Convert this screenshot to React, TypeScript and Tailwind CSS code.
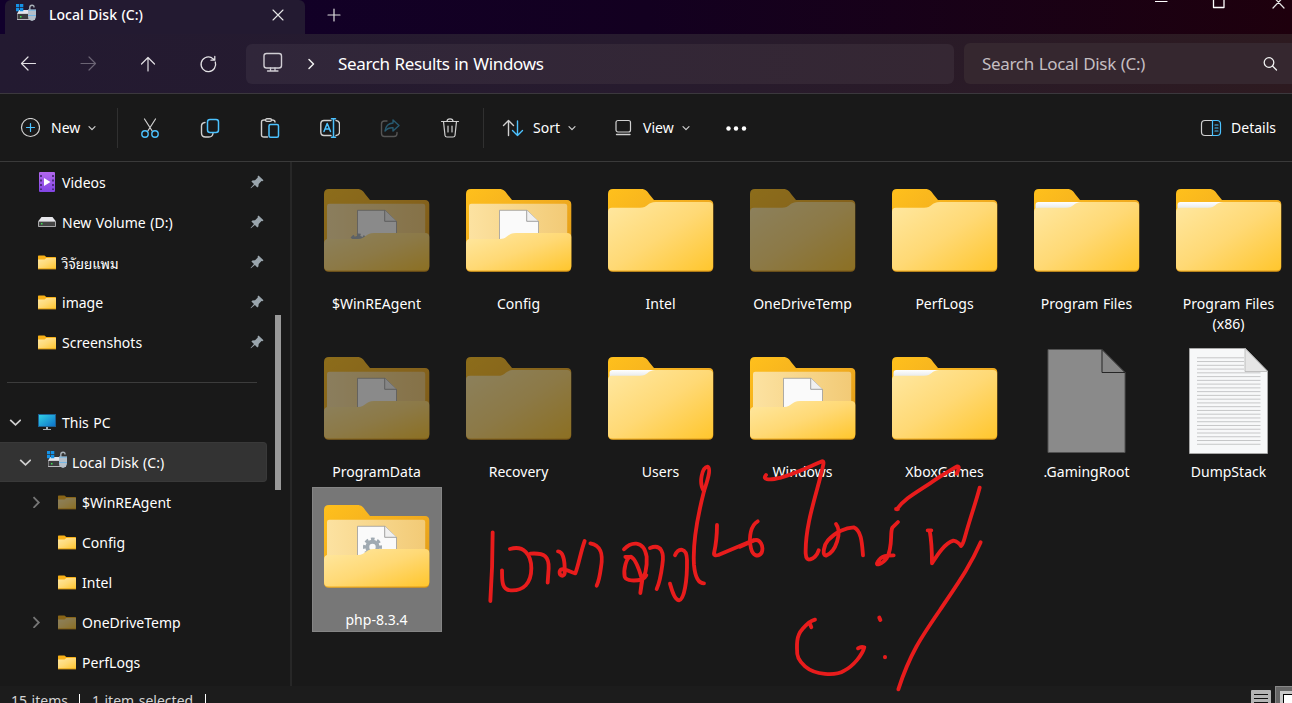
import type { ReactNode } from "react";

const BLUE = "#4cc2ff";
const GREY = "#d0d0d0";

function Icon({ children, w = 20, h = 20, className = "" }: { children: ReactNode; w?: number; h?: number; className?: string }) {
  return (
    <svg width={w} height={h} viewBox={`0 0 ${w} ${h}`} fill="none" stroke={GREY} strokeWidth="1.2" strokeLinecap="round" strokeLinejoin="round" className={`shrink-0 ${className}`}>
      {children}
    </svg>
  );
}

function DriveIcon() {
  return (
    <svg width="20" height="18" viewBox="0 0 20 18" className="shrink-0">
      <path d="M3 6h14l2 4H1z" fill="#e4e4ea" />
      <rect x="1" y="9.500" width="18" height="6.500" rx=".6" fill="#b8b8bc" />
      <rect x="1.500" y="10" width="11" height="5" fill="#3c3c3e" />
      <rect x="4" y="12" width="1.500" height="1.500" fill="#35e04b" />
      <path d="M0 0h3.300v3.300H0zM4 0h3.300v3.300H4zM0 4h3.300v3.300H0zM4 4h3.300v3.300H4z" fill="#1592e6" />
      <path d="M13.800 6V3.500q0-2.300 2.200-2.300T18 3.500" fill="none" stroke="#a9b1b8" strokeWidth="1.400" />
      <path d="M12 5.500h8v6.500q0 4-4 5-4-1-4-5z" fill="#b4bfc9" />
      <path d="M12 6.200h8M12 11.500h8" stroke="#6db4e6" strokeWidth=".9" />
    </svg>
  );
}

function SmallFolder({ dim = false }: { dim?: boolean }) {
  return (
    <svg width="18" height="15" viewBox="0 0 18 15" className={dim ? "shrink-0 opacity-50" : "shrink-0"}>
      <path d="M0 1.200Q0 .5.700.5H6.500L8.300 2H17.400Q18 2 18 2.600V14H0z" fill="#f8b117" />
      <path d="M0 4.500H6.500L8.300 3H18V13.500H0z" fill="url(#front)" />
      <path d="M0 14h18" stroke="#d99a1c" strokeWidth=".8" />
    </svg>
  );
}

function Pin() {
  return (
    <svg width="14" height="14" viewBox="0 0 14 14" className="shrink-0" fill="#9aa5ad">
      <path d="M8.500.500 13.500 5.200 12.400 6.300 11.500 6.100 8.700 9 8.400 11.500 7.300 12.500 4.900 9.900 1 13.300.5 12.900 4 9 1.400 6.500 2.400 5.400 5 5.200 7.800 2.400 7.600 1.500z" />
    </svg>
  );
}

function Chevron({ open }: { open?: boolean }) {
  return open ? (
    <svg width="12" height="12" viewBox="0 0 12 12" fill="none" stroke="#cfcfcf" strokeWidth="1.800" className="shrink-0">
      <path d="M1.200 3.800 6.500 8.800 11.800 3.800" />
    </svg>
  ) : (
    <svg width="12" height="12" viewBox="0 0 12 12" fill="none" stroke="#767676" strokeWidth="1.800" className="shrink-0">
      <path d="M3.500 1.200 8.800 6.500 3.500 11.800" />
    </svg>
  );
}

function MenuChevron() {
  return (
    <Icon w={10} h={8}>
      <path d="M2 2.700 5 5.700 8 2.700" strokeWidth="1.200" />
    </Icon>
  );
}

function MenuLabel({ children, className }: { children: ReactNode; className: string }) {
  return <span className={`pt-px ${className}`}>{children}</span>;
}

type Kind = "closed" | "full" | "open" | "gear" | "gearLow" | "blank" | "text";

function Gear({ x, y }: { x: number; y: number }) {
  return (
    <g transform={`translate(${x} ${y})`} fill="none" stroke="#a0aab2">
      <circle r="5.200" strokeWidth="4" />
      <circle r="8" strokeWidth="3" strokeDasharray="3.600 2.683" strokeDashoffset="1.800" />
    </g>
  );
}

function BigIcon({ kind, dim }: { kind: Kind; dim?: boolean }) {
  const opened = kind === "open" || kind === "gear" || kind === "gearLow";
  const folder = opened || kind === "closed" || kind === "full";
  return (
    <svg width="130" height="122" viewBox="0 0 130 122" className={dim ? "shrink-0 opacity-50" : "shrink-0"}>
      {folder && (
        <path d="M12 23Q12 18 17 18H45C50 18 51.500 20.500 53.500 23.500L58 29H113Q117.300 29 117.300 33.500V96Q117.300 100.800 112.500 100.800H17Q12 100.800 12 96z" fill="url(#back)" />
      )}
      {kind === "full" && <path d="M13.500 41V34Q13.500 31 16.500 31H60L50 38H13.500z" fill="url(#sheet)" />}
      {folder && !opened && (
        <path d="M12 41Q12 36.800 16 36.800H44C52 36.800 51 31 60 31H113Q117 31 117 35V95Q117 99.500 112.500 99.500H16.500Q12 99.500 12 95z" fill="url(#front)" />
      )}
      {opened && (
        <>
          <path d="M15 35Q15 32.700 17.300 32.700H111Q113.200 32.700 113.200 35V72H15z" fill="url(#inner)" />
          <path d="M45.500 75V39.300H73L84.500 50.500V75z" fill="#fafafa" stroke="#9a9a9a" strokeWidth=".8" />
          <path d="M72.700 39.300V50.300H84.500" fill="#f0f0f0" stroke="#8a8a8a" strokeWidth=".8" />
          {kind === "gear" && <Gear x={60.500} y={60} />}
          {kind === "gearLow" && <Gear x={46.500} y={72} />}
          <path d="M12 72.500Q12 68 16 68H46C54 68 53 62 62 62H113Q117.300 62 117.300 66V95Q117.300 99.500 112.500 99.500H16.500Q12 99.500 12 95z" fill="url(#front)" />
        </>
      )}
      {kind === "blank" && (
        <>
          <path d="M26 10.500H80L103 33.500V113.500H26z" fill="#fafafa" stroke="#8a8a8a" />
          <path d="M80 10.500V33.500H103z" fill="#f4f4f4" stroke="#333" />
        </>
      )}
      {kind === "text" && (
        <>
          <path d="M25.500 9.500H81.500L103.500 32V114.500H25.500z" fill="#f7f8f9" stroke="#b4b4b4" strokeWidth=".7" />
          <g stroke="#c6c7c8">
            {Array.from({ length: 24 }, (_, i) => (
              <path key={i} d={`M33 ${18.800 + i * 3.760}H${i < 4 ? 80 : 96.500}`} />
            ))}
          </g>
          <path d="M81 9.500V32.500H103.500z" fill="#e6e6e6" stroke="#b4b4b4" strokeWidth=".8" />
        </>
      )}
    </svg>
  );
}

const files: { name: string; kind: Kind; dim?: boolean; selected?: boolean }[] = [
  { name: "$WinREAgent", kind: "gearLow", dim: true },
  { name: "Config", kind: "open" },
  { name: "Intel", kind: "closed" },
  { name: "OneDriveTemp", kind: "closed", dim: true },
  { name: "PerfLogs", kind: "closed" },
  { name: "Program Files", kind: "full" },
  { name: "Program Files (x86)", kind: "full" },
  { name: "ProgramData", kind: "open", dim: true },
  { name: "Recovery", kind: "closed", dim: true },
  { name: "Users", kind: "full" },
  { name: "Windows", kind: "open" },
  { name: "XboxGames", kind: "full" },
  { name: ".GamingRoot", kind: "blank", dim: true },
  { name: "DumpStack", kind: "text" },
  { name: "php-8.3.4", kind: "gear", selected: true },
];

function QuickRow({ icon, label, thai }: { icon: ReactNode; label: string; thai?: boolean }) {
  return (
    <div className="flex h-10 w-[267px] items-center pl-[38px] pr-[3px]">
      <span className="flex w-6 items-center">{icon}</span>
      <span className={thai ? "flex-1 pt-0.5 font-['Noto_Sans_Thai_Looped','Noto_Looped_Thai','Loma','Waree','Garuda','Noto_Sans_Thai',sans-serif] text-[13.5px] tracking-normal" : "flex-1 pt-0.5"}>{label}</span>
      <Pin />
    </div>
  );
}

function TreeRow({ label, chevron, dim }: { label: string; chevron?: boolean; dim?: boolean }) {
  return (
    <div className="flex h-10 items-center pl-[30px]">
      <span className="flex w-7 items-center">{chevron && <Chevron />}</span>
      <span className="flex w-6 items-center"><SmallFolder dim={dim} /></span>
      <span className="pt-0.5">{label}</span>
    </div>
  );
}

function Handwriting() {
  return (
    <svg width="1292" height="703" viewBox="0 0 1292 703" className="pointer-events-none absolute left-0 top-0" fill="none" stroke="#e81c1c" strokeLinecap="round" strokeLinejoin="round">
      <g transform="translate(470 440) scale(.33333)" strokeWidth="11.500">
        <path d="M68 277 Q68 380 61 483" />
        <path d="M120 327C160 315 184 342 184 385C184 430 160 453 122 451C92 449 97 415 96 391" />
        <path d="M181 341C225 338 237 350 236 385L233 428" />
        <path d="M264 334C282 335 285 372 284 400C280 413 267 407 269 394C275 378 295 395 316 400C326 375 332 335 344 303" />
        <path d="M361 310C397 317 399 348 393 382C389 412 386 425 380 437" />
        <path d="M462 328C480 308 520 295 530 350C532 385 524 410 516 418C497 423 470 424 464 410C460 390 468 352 483 350C500 360 511 400 516 418Q525 415 529 406M466 351L483 350M516 418L511 459L517 420" />
        <path d="M540 324C575 310 583 340 577 375C573 405 568 430 560 447" />
        <path d="M615 346C625 323 650 320 651 360C652 420 643 479 627 481C614 480 606 452 600 431" />
        <path d="M702 154C685 130 696 82 713 80C725 86 710 128 702 154C685 220 667 300 672 375C675 408 682 430 702 430" />
        <path d="M741 255Q741 300 732 340Q731 349 745 345L850 301" />
      </g>
      <g transform="translate(740 440) scale(.33333)" strokeWidth="11.500">
        <path d="M0 320L38 303C60 292 72 318 65 338C54 354 38 346 33 325C25 290 33 255 53 244" />
        <path d="M78 105C65 120 90 119 103 117C145 110 185 90 246 64Q253 62 249 78C234 150 195 250 197 340C198 357 204 361 211 358Q229 352 236 331" />
        <path d="M288 252C307 275 288 336 258 347C246 345 251 316 264 301C286 275 319 263 341 262C365 272 366 310 369 346" />
        <path d="M470 208C495 175 525 160 570 130C600 110 630 90 653 79Q661 80 650 101M468 207H474" />
        <path d="M474 246L457 263C449 280 460 320 440 355C425 374 404 379 413 366C424 346 443 346 461 346" />
        <path d="M563 271H574M569 271C574 300 576 340 576 370C595 340 615 310 640 302Q655 305 663 318Q669 313 675 290C695 220 705 195 719 143" />
        <path d="M722 307C690 380 650 435 600 510C545 590 510 640 475 748" />
        <path d="M225 539Q216 542 208 547L214 562M208 547C175 575 170 590 171 625C170 650 176 662 195 679C225 705 285 709 313 692C340 678 367 645 373 622Q363 619 354 625" />
        <path d="M418 533L421 540M435 651V652" strokeWidth="12" />
      </g>
    </svg>
  );
}

export default function App() {
  return (
    <div className="relative flex h-[703px] w-[1292px] flex-col overflow-hidden bg-[#191919] font-['Noto_Sans','Noto_Sans_Thai','Liberation_Sans',sans-serif] text-[14px] leading-5 tracking-[0.02px] text-white [word-spacing:0.8px]">
      <svg width="0" height="0" className="absolute">
        <defs>
          <linearGradient id="back" x1="0" y1="0" x2="1" y2="1"><stop stopColor="#ffc01c" /><stop offset=".5" stopColor="#f1ac20" /><stop offset="1" stopColor="#dc9713" /></linearGradient>
          <linearGradient id="front" x1="0" y1="0" x2="1" y2="1"><stop stopColor="#ffe8a2" /><stop offset=".5" stopColor="#ffd975" /><stop offset="1" stopColor="#ffc62d" /></linearGradient>
          <linearGradient id="inner" x1="0" y1="0" x2="1" y2="0"><stop stopColor="#fce2a1" /><stop offset="1" stopColor="#f2ca76" /></linearGradient>
          <linearGradient id="sheet" x1="0" y1="0" x2="0" y2="1"><stop stopColor="#fff" /><stop offset="1" stopColor="#d9dcde" /></linearGradient>
          <linearGradient id="screen" x1="0" y1="0" x2="1" y2="1"><stop stopColor="#32d3e6" /><stop offset="1" stopColor="#0c6fc9" /></linearGradient>
          <linearGradient id="film" x1="0" y1="0" x2="0" y2="1"><stop stopColor="#b267ee" /><stop offset="1" stopColor="#8245e4" /></linearGradient>
        </defs>
      </svg>

      <header className="flex h-[94px] shrink-0 flex-col border-b border-[#3b383d] bg-linear-to-r from-[#231a31] via-[#271b2e] to-[#2d1a20]">
        <div className="flex h-[34px] bg-linear-to-r from-[#11002c] via-[#130020] to-[#1e000d]">
          <div className="ml-[5px] flex h-[34px] w-[300px] items-center rounded-t-md bg-[#231a31] pb-[5px] pl-[11px]">
            <span className="mb-[4px] flex"><DriveIcon /></span>
            <span className="ml-[13px] w-[223px] pt-px font-medium">Local Disk (C:)</span>
            <Icon w={12} h={12}><path d="M1 1 11 11M11 1 1 11" stroke="#e6e6e6" strokeWidth="1.100" /></Icon>
          </div>
          <div className="flex flex-1 items-center pb-[4px] pl-[22px]">
            <Icon w={14} h={14}><path d="M7 1V13M1 7H13" stroke="#dedede" /></Icon>
          </div>
          <div className="flex w-[140px]">
            <Icon w={14} h={12} className="ml-[3px]"><path d="M0 1.500H12" stroke="#fff" /></Icon>
            <Icon w={14} h={12} className="ml-[43px]"><path d="M1.500-4V7.500H12V-4" stroke="#fff" strokeWidth="1.300" /></Icon>
            <Icon w={14} h={12} className="ml-[46px]"><path d="M1 8 11.500-3M12 8 1-3.500" stroke="#e6e6e6" /></Icon>
          </div>
        </div>
        <div className="flex h-[59px] items-center pl-[18px]">
          <Icon className="mr-10"><path d="M17.500 9.500H3.500M10 3 3.500 9.500 10 16" stroke="#e2e0e4" /></Icon>
          <Icon className="mr-10"><path d="M3 9.500H17.500M11 3 17.500 9.500 11 16" stroke="#6b6474" /></Icon>
          <Icon className="mr-10"><path d="M10 17V3.500M3.500 10 10 3.500 16.500 10" stroke="#e2e0e4" /></Icon>
          <Icon className="mr-7"><path d="M17.300 8A7.300 7.300 0 1 1 13.500 3.700L16.800 6M16.800 2.500V6.200H13" stroke="#e2e0e4" strokeWidth="1.300" /></Icon>
          <div className="flex h-10 w-[708px] items-center rounded-md bg-[#30263a] bg-linear-to-r from-[#30263a] to-[#352733] pl-4">
            <Icon w={22} h={22} className="mb-1"><rect x="2" y="2.500" width="17.500" height="14.500" rx="2.500" stroke="#d0cdd3" strokeWidth="1.400" /><path d="M8.500 17V19.500M13 17V19.500M5.500 20H16" stroke="#d0cdd3" strokeWidth="1.300" /></Icon>
            <Icon w={12} h={12} className="ml-[21px]"><path d="M4 1.500 8.500 6 4 10.500" stroke="#f0f0f0" strokeWidth="1.500" /></Icon>
            <span className="ml-[21px] text-[17px] tracking-[-0.36px]">Search Results in Windows</span>
          </div>
          <div className="ml-[10px] flex h-[41px] flex-1 items-center rounded-l-md bg-[#35272f] pl-[18px] pr-[14px]">
            <span className="flex-1 text-[17px] tracking-[-0.33px] text-[#c4bec2]">Search Local Disk (C:)</span>
            <Icon w={16} h={16}><circle cx="7" cy="6.500" r="4.800" stroke="#f0f0f0" strokeWidth="1.300" /><path d="M10.500 10 14.500 14" stroke="#f0f0f0" strokeWidth="1.300" /></Icon>
          </div>
        </div>
      </header>

      <div className="flex h-[68px] shrink-0 items-center border-b border-[#3a3a3a] pl-5">
        <Icon><circle cx="10.500" cy="9.500" r="9" /><path d="M10.500 5.500V13.500M6.500 9.500H14.500" stroke={BLUE} /></Icon>
        <MenuLabel className="ml-[11px] w-9">New</MenuLabel>
        <MenuChevron />
        <div className="ml-5 mr-[22px] h-10 w-px bg-[#303030]" />
        <Icon className="mr-10"><path d="M4.500 1 12.500 13.500M15.500 1 7.500 13.500" /><g stroke={BLUE} strokeWidth="1.400"><circle cx="5" cy="16" r="3.200" /><circle cx="15" cy="16" r="3.200" /></g></Icon>
        <Icon className="mr-10"><path d="M5 4.500Q1.500 5 1.500 8V15Q1.500 19 5.500 19H9Q12.500 19 13 15.500" strokeWidth="1.400" /><rect x="7.500" y="1.500" width="11" height="13" rx="2.500" stroke={BLUE} strokeWidth="1.500" /></Icon>
        <Icon className="mr-10"><path d="M7.500 19H4Q1.500 19 1.500 17V4Q1.500 2 4 2H5M12 2Q15 2 15 4" strokeWidth="1.400" /><rect x="5.500" y=".8" width="6" height="2.600" rx="1.300" strokeWidth="1.400" /><rect x="9" y="6.500" width="9.500" height="12.700" rx="1.500" stroke={BLUE} strokeWidth="1.500" /></Icon>
        <Icon className="mr-10"><path d="M11 2.500H4Q.8 2.500.8 5.500V14Q.8 17.500 4 17.500H11M16 2.500Q19.500 3 19.500 6V14Q19.500 17 16 17.500" strokeWidth="1.400" /><path d="M4 13.500 7.200 5.500 10.500 13.500M5 11H9.500M13.500.8V19.200M11.500.8H15.500M11.500 19.200H15.500" stroke={BLUE} strokeWidth="1.500" /></Icon>
        <Icon className="mr-10"><path d="M7 3H4.500Q1.500 3 1.500 6V15.500Q1.500 18.500 4.500 18.500H14Q17 18.500 17 15.500V14.500" stroke="#555" strokeWidth="1.400" /><path d="M13 2 19 7.500 13 13V9.800Q8 9.500 5 13Q6 5.500 13 5z" stroke="#285a70" strokeWidth="1.400" /></Icon>
        <Icon><path d="M1.500 3.500H18.500M7 3.300Q7 .8 10 .8T13 3.300M3.500 3.500 5 17.500Q5.200 19 7 19H13Q14.800 19 15 17.500L16.500 3.500M8 8V14M12 8V14" /></Icon>
        <div className="ml-[23px] mr-[18px] h-10 w-px bg-[#303030]" />
        <Icon w={22}><path d="M6.500 17.500V2.500M1.500 7.500 6.500 2.500 11.500 7.500" strokeWidth="1.400" /><path d="M15.500 3V17.500M10.500 12.500 15.500 17.500 20.500 12.500" stroke={BLUE} strokeWidth="1.400" /></Icon>
        <MenuLabel className="ml-[9px] w-[34px]">Sort</MenuLabel>
        <MenuChevron />
        <Icon className="ml-[37px]"><rect x="2" y="2.500" width="14.500" height="11.500" rx="2" /><path d="M2.500 16.500H16" strokeWidth="1.400" /></Icon>
        <MenuLabel className="ml-[9px] w-[38px]">View</MenuLabel>
        <MenuChevron />
        <Icon w={24} className="ml-[33px]"><g fill="#fff" stroke="none"><circle cx="4.500" cy="10.500" r="2.200" /><circle cx="12" cy="10.500" r="2.200" /><circle cx="20" cy="10.500" r="2.200" /></g></Icon>
        <div className="ml-auto mr-[15px] flex items-center">
          <Icon w={22}><path d="M12 2.500H5Q1.500 2.500 1.500 6V14Q1.500 17.500 5 17.500H12" /><path d="M12.500 2.500H17Q20.500 2.500 20.500 6V14Q20.500 17.500 17 17.500H12.500zM15 7H18M15 10H18M15 13H18" stroke={BLUE} /></Icon>
          <MenuLabel className="ml-[9px] w-[46px]">Details</MenuLabel>
        </div>
      </div>

      <div className="flex h-[524px] shrink-0">
        <nav className="flex h-full w-[292px] shrink-0 border-r-2 border-[#272727]">
          <div className="w-[267px] shrink-0">
            <QuickRow label="Videos" icon={<svg width="18" height="20" viewBox="0 0 18 20"><rect x="1" width="16" height="20" rx="1" fill="url(#film)" /><path d="M3 3V18M15 3V18" stroke="#3b2264" strokeWidth="1.600" strokeDasharray="2 2.500" /><path d="M6 6 12.500 10 6 14z" fill="#fff" /></svg>} />
            <QuickRow label="New Volume (D:)" icon={<svg width="18" height="12" viewBox="0 0 18 12"><path d="M3.500 1H14.500L18 5.500H0z" fill="#e6e6ea" /><rect y="5" width="18" height="6" rx=".7" fill="#a8a8aa" /><rect x="1" y="6" width="16" height="4" fill="#444" /><rect x="3" y="7" width="1.500" height="1.500" fill="#35e04b" /></svg>} />
            <QuickRow label="วิจัยยแพม" thai icon={<SmallFolder />} />
            <QuickRow label="image" icon={<SmallFolder />} />
            <QuickRow label="Screenshots" icon={<SmallFolder />} />
            <div className="flex h-10 items-center pl-[7px]"><div className="h-px w-[250px] bg-[#3c3c3c]" /></div>
            <div className="flex h-10 items-center pl-[9px]">
              <Chevron open />
              <svg width="18" height="16" viewBox="0 0 18 16" className="ml-[17px] mr-[6px]"><rect x=".5" y=".5" width="17" height="12" fill="url(#screen)" stroke="#1d5f92" /><path d="M8 13h2v2h3v1H5v-1h3z" fill="#a7b0b7" /></svg>
              <span className="pt-0.5">This PC</span>
            </div>
            <div className="flex h-10 items-center rounded-r-sm border border-l-0 border-[#393939] bg-[#333] pl-[19px]">
              <Chevron open />
              <span className="mb-1 ml-4 mr-[5px] flex"><DriveIcon /></span>
              <span className="pt-0.5">Local Disk (C:)</span>
            </div>
            <TreeRow label="$WinREAgent" chevron dim />
            <TreeRow label="Config" />
            <TreeRow label="Intel" />
            <TreeRow label="OneDriveTemp" chevron dim />
            <TreeRow label="PerfLogs" />
          </div>
          <div className="ml-2 mt-[153px] h-[175px] w-1.5 bg-[#999]" />
        </nav>

        <main className="grid w-[1000px] shrink-0 grid-cols-[repeat(7,130px)] grid-rows-[168px_148px_146px] gap-x-3 pl-[19.5px] pt-[9px]">
          {files.map((f) => (
            <div key={f.name} className={f.selected ? "flex h-[145px] flex-col items-center bg-[#777] outline -outline-offset-1 outline-[#858585]" : "flex flex-col items-center"}>
              <BigIcon kind={f.kind} dim={f.dim} />
              <span className="w-[106px] pt-px text-center">{f.name}</span>
            </div>
          ))}
        </main>
      </div>

      <footer className="flex h-[17px] shrink-0 overflow-hidden bg-[#1c1c1c] pl-[11px] text-[#d4d4d4]">
        <span className="mt-[5px] w-[68px]">15 items</span>
        <span className="mt-2 h-4 w-px bg-white" />
        <span className="ml-3 mt-[5px] w-[113px] whitespace-nowrap">1 item selected</span>
        <span className="mt-2 h-4 w-px bg-white" />
        <svg width="42" height="17" viewBox="0 0 42 17" className="ml-auto shrink-0">
          <rect x="1" y="4" width="20" height="18" rx="1" fill="#b5b5b5" />
          <path d="M4 8.500H18M4 12.500H18M4 16.500H18" stroke="#111" strokeWidth="1.200" />
          <rect x="25.500" y=".5" width="20" height="20" fill="#666" stroke="#888" />
          <rect x="30" y="5" width="14" height="14" fill="#c8c8c8" />
          <rect x="33.500" y="8.500" width="12" height="12" fill="#fff" stroke="#000" />
        </svg>
      </footer>
      <Handwriting />
    </div>
  );
}
